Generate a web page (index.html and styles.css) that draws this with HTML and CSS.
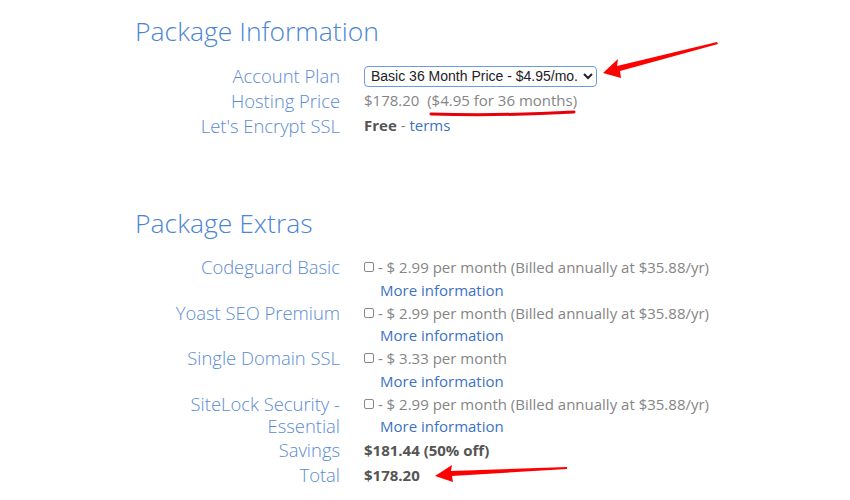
FILE: index.html
```html
<!DOCTYPE html>
<html lang="en">
<head>
    <meta charset="UTF-8">
    <title>Package Information</title>
    <link rel="stylesheet" href="styles.css">
</head>
<body>
    <div class="page">
        <section class="block">
            <h2>Package Information</h2>
            <div class="rows">
                <div class="label">Account Plan</div>
                <div class="value">
                    <select class="plan">
                        <option>Basic 36 Month Price - $4.95/mo.</option>
                    </select>
                </div>
                <div class="label">Hosting Price</div>
                <div class="value">$178.20 &nbsp;($4.95 for 36 months)</div>
                <div class="label">Let's Encrypt SSL</div>
                <div class="value"><b>Free</b> - <a href="#">terms</a></div>
            </div>
        </section>

        <section class="block extras">
            <h2>Package Extras</h2>
            <div class="rows">
                <div class="label">Codeguard Basic</div>
                <div class="value">
                    <span class="box"></span> - $ 2.99 per month (Billed annually at $35.88/yr)
                    <a class="more" href="#">More information</a>
                </div>
                <div class="label">Yoast SEO Premium</div>
                <div class="value">
                    <span class="box"></span> - $ 2.99 per month (Billed annually at $35.88/yr)
                    <a class="more" href="#">More information</a>
                </div>
                <div class="label">Single Domain SSL</div>
                <div class="value">
                    <span class="box"></span> - $ 3.33 per month
                    <a class="more" href="#">More information</a>
                </div>
                <div class="label">SiteLock Security -<br>Essential</div>
                <div class="value">
                    <span class="box"></span> - $ 2.99 per month (Billed annually at $35.88/yr)
                    <a class="more" href="#">More information</a>
                </div>
                <div class="label sum">Savings</div>
                <div class="value sum"><b>$181.44 (50% off)</b></div>
                <div class="label sum">Total</div>
                <div class="value sum"><b>$178.20</b></div>
            </div>
        </section>
    </div>

    <svg class="marks" width="850" height="500" viewBox="0 0 850 500">
        <polygon points="603,73 618,59 617,66 717,42 718,44 620,71 621,78" fill="#f00"/>
        <path d="M431,114 Q500,116 574,112" stroke="#e8000a" stroke-width="3" fill="none" stroke-linecap="round"/>
        <polygon points="435,476 452,465 451,471 567,467 567,469 452,476 453,482" fill="#f00"/>
    </svg>
</body>
</html>
```

FILE: styles.css
```css
body {
    margin: 0;
    background: #fff;
    font-family: "Open Sans", sans-serif;
    color: #777;
}

.page {
    position: relative;
    padding: 13px 0 0 135px;
}

h2 {
    margin: 0 0 14px;
    font-size: 26.5px;
    font-weight: 300;
    color: #4a85d6;
    line-height: 36px;
}

.extras {
    margin-top: 67px;
}

.rows {
    display: grid;
    grid-template-columns: 205px 1fr;
    column-gap: 24px;
}

.label {
    text-align: right;
    font-size: 18.4px;
    font-weight: 300;
    color: #5b8bd2;
    line-height: 25px;
}

.extras .label {
    line-height: 22.75px;
}

.value {
    font-size: 15px;
    line-height: 25px;
    color: #858585;
}

.extras .value {
    line-height: 22.75px;
}

.extras .sum {
    line-height: 24.75px;
}

.extras h2 + .rows {
    padding-top: 1px;
}

.value b {
    color: #555;
    font-weight: 700;
}

.value a {
    color: #3d72c4;
    text-decoration: none;
}

.more {
    display: block;
    padding-left: 16px;
}

.plan {
    font-family: "Liberation Sans", Arial, sans-serif;
    font-size: 14px;
    color: #222;
    height: 21px;
    padding: 0 2px;
    border: 1px solid #6b9be0;
    border-radius: 4px;
    background: #fff;
}

.box {
    display: inline-block;
    width: 8px;
    height: 8px;
    border: 1px solid #888;
    border-radius: 2px;
    vertical-align: 1px;
}

.marks {
    position: absolute;
    left: 0;
    top: 0;
    pointer-events: none;
}
```
